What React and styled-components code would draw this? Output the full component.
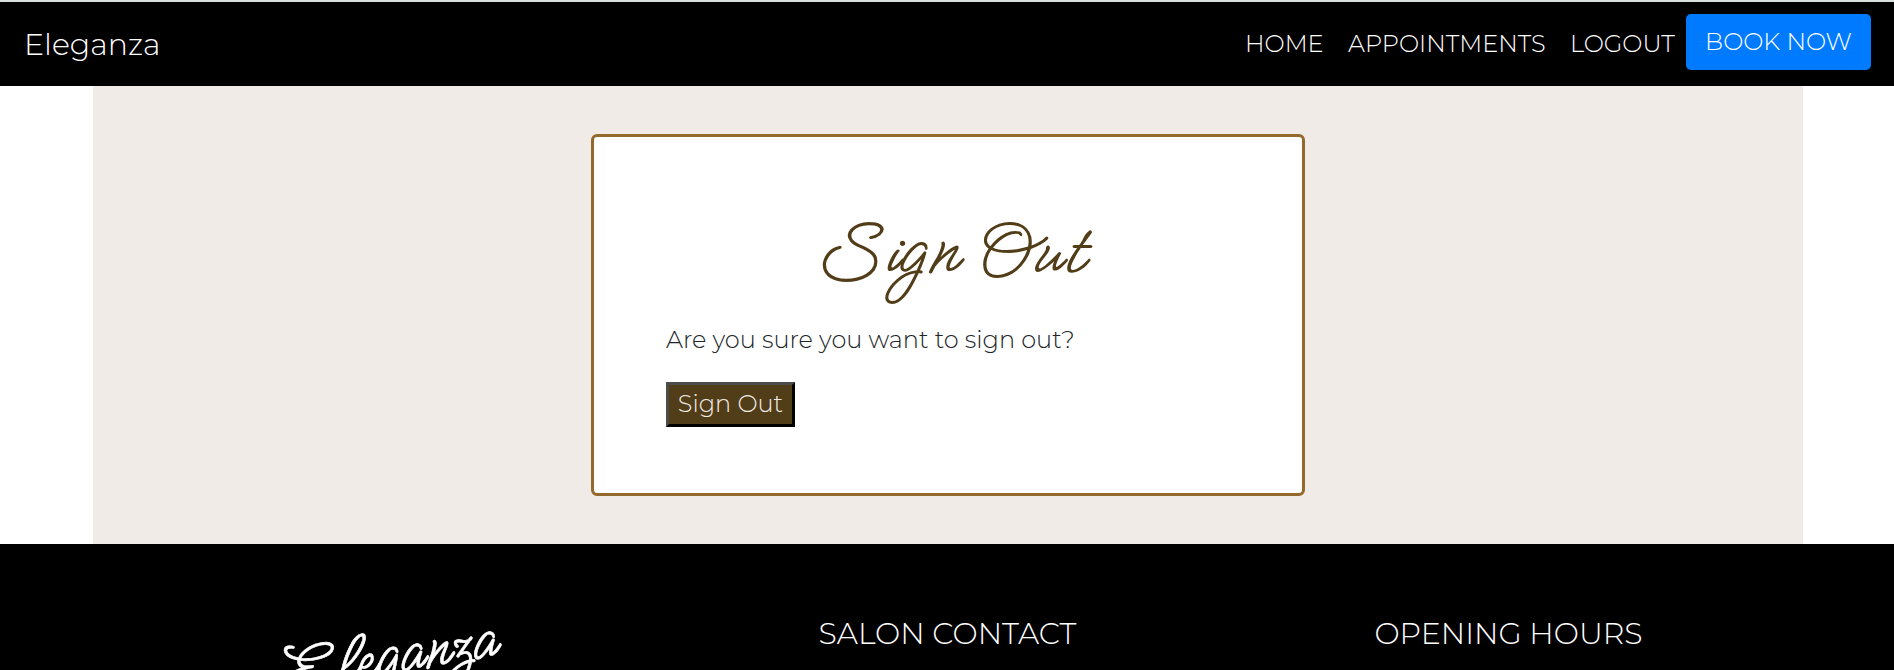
import React from 'react';
import styled, { createGlobalStyle } from 'styled-components';

const GlobalStyle = createGlobalStyle`
  *, *::before, *::after { box-sizing: border-box; }
  body {
    margin: 0;
    background: #fff;
    color: #212529;
    font-family: Montserrat, Inter, 'Liberation Sans', sans-serif;
    font-weight: 300;
    font-size: 24px;
    line-height: 36px;
    overflow: hidden;
  }
  h1, h2, p { margin: 0; font-weight: 300; }
  a { color: inherit; text-decoration: none; }
`;

const Page = styled.div`
  display: flex;
  flex-direction: column;
  height: 670px;
  overflow: hidden;
`;

const Navbar = styled.nav`
  display: flex;
  flex: none;
  align-items: flex-start;
  justify-content: space-between;
  height: 86px;
  padding: 12px 23px 0 24px;
  border-top: 2px solid #dadedf;
  background: #000;
  color: #fff;
`;

const Brand = styled.a`
  padding-top: 9px;
  font-size: 30px;
  line-height: 44px;
`;

const NavLinks = styled.div`
  display: flex;
`;

const NavLink = styled.a`
  width: ${(p) => p.$width}px;
  padding: 12px 0 0 12px;
  white-space: nowrap;
`;

const BookButton = styled.a`
  width: 185px;
  height: 56px;
  padding-top: 10px;
  border-radius: 5px;
  background: #007bff;
  text-align: center;
  white-space: nowrap;
`;

const Main = styled.main`
  flex: none;
  display: flex;
  justify-content: center;
  align-items: center;
  height: 458px;
  margin: 0 91px 0 93px;
  background: #f0ebe7;
`;

const Card = styled.section`
  width: 714px;
  height: 362px;
  padding: 66px 72px 72px;
  border: 3px solid #936a2b;
  border-radius: 6px;
  background: #fff;
`;

const Title = styled.h1`
  height: 119px;
  color: #523d19;
  font-family: 'Meow Script', 'Alex Brush', cursive;
  font-weight: 400;
  font-size: 84px;
  line-height: 100px;
  text-align: center;
  white-space: nowrap;
`;

const Question = styled.p`
  height: 60px;
  white-space: nowrap;
`;

const SignOutButton = styled.button`
  display: block;
  width: 129px;
  height: 45px;
  padding: 0 0 2px;
  border: 3px solid;
  border-color: #4c4c4c #000 #000 #4c4c4c;
  background: #523d19;
  color: #f0ebe7;
  font: inherit;
  line-height: 36px;
  white-space: nowrap;
`;

const Footer = styled.footer`
  flex: 1;
  display: grid;
  grid-template-columns: 339px 557px 1fr;
  padding-left: 330px;
  padding-right: 103px;
  background: #000;
  color: #fff;
`;

const FooterColumn = styled.div`
  display: flex;
  justify-content: center;
  padding-top: ${(p) => p.$top || 68}px;
`;

const FooterTitle = styled.h2`
  font-size: 30px;
  line-height: 44px;
  white-space: nowrap;
`;

const Logo = styled.span`
  height: 70px;
  margin-left: -226px;
  font-family: 'Meow Script', 'Alex Brush', cursive;
  font-weight: 400;
  font-size: 72px;
  line-height: 70px;
  transform: rotate(-9.5deg);
  -webkit-text-stroke: 0.6px #fff;
`;

export default function App() {
  return (
    <>
      <GlobalStyle />
      <Page>
        <Navbar>
          <Brand href="#">Eleganza</Brand>
          <NavLinks>
            <NavLink href="#" $width={103}>HOME</NavLink>
            <NavLink href="#" $width={222}>APPOINTMENTS</NavLink>
            <NavLink href="#" $width={128}>LOGOUT</NavLink>
            <BookButton href="#">BOOK NOW</BookButton>
          </NavLinks>
        </Navbar>
        <Main>
          <Card>
            <Title>Sign Out</Title>
            <Question>Are you sure you want to sign out?</Question>
            <SignOutButton type="button">Sign Out</SignOutButton>
          </Card>
        </Main>
        <Footer>
          <FooterColumn $top={79}><Logo>Eleganza</Logo></FooterColumn>
          <FooterColumn><FooterTitle>SALON CONTACT</FooterTitle></FooterColumn>
          <FooterColumn><FooterTitle>OPENING HOURS</FooterTitle></FooterColumn>
        </Footer>
      </Page>
    </>
  );
}
